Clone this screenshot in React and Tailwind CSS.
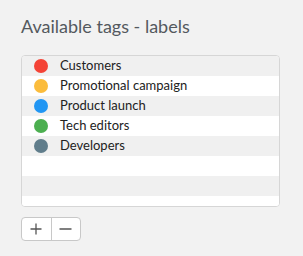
import React from "react";

const tags = [
  { name: "Customers", color: "bg-[#f44336]" },
  { name: "Promotional campaign", color: "bg-[#fbbc3c]" },
  { name: "Product launch", color: "bg-[#2196f3]" },
  { name: "Tech editors", color: "bg-[#4caf50]" },
  { name: "Developers", color: "bg-[#607d8b]" },
];

export default function App() {
  const rows = [...tags, null, null, null];

  return (
    <div className="min-h-screen w-[303px] h-[256px] bg-[#f2f2f2] px-[21px] pt-[14px] font-['Lato',sans-serif]">
      <h2 className="text-[18px] leading-[24px] text-[#54595e]">Available tags - labels</h2>

      <div className="mt-[17px] w-[259px] h-[152px] overflow-hidden rounded-[4px] border border-[#d6d6d6] bg-white">
        {rows.map((tag, i) => (
          <div
            key={i}
            className={`flex h-[20px] items-center ${i % 2 === 0 ? "bg-[#f0f0f0]" : "bg-white"}`}
          >
            {tag && (
              <>
                <span className={`ml-[12px] h-[14px] w-[14px] rounded-full ${tag.color}`} />
                <span className="ml-[12px] text-[13px] text-[#222]">{tag.name}</span>
              </>
            )}
          </div>
        ))}
      </div>

      <div className="mt-[10px] flex h-[24px] w-[60px] overflow-hidden rounded-[4px] border border-[#c8c8c8] bg-white">
        <button className="flex flex-1 items-center justify-center border-r border-[#c8c8c8] text-[#444]">
          <svg width="12" height="12" viewBox="0 0 12 12">
            <path d="M6 0.5v11M0.5 6h11" stroke="#555" strokeWidth="1.3" />
          </svg>
        </button>
        <button className="flex flex-1 items-center justify-center text-[#444]">
          <svg width="13" height="12" viewBox="0 0 13 12">
            <path d="M0.5 6h12" stroke="#555" strokeWidth="1.3" />
          </svg>
        </button>
      </div>
    </div>
  );
}
